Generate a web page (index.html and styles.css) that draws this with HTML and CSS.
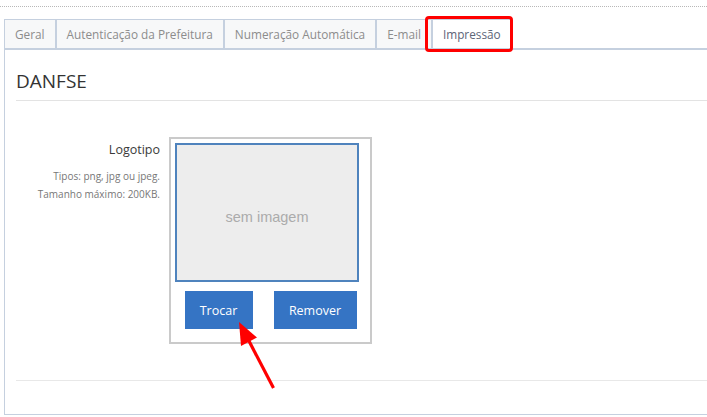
FILE: index.html
```html
<!DOCTYPE html>
<html lang="pt-BR">
<head>
<meta charset="utf-8">
<title>DANFSE</title>
<link rel="stylesheet" href="styles.css">
</head>
<body>
<div class="top-rule"></div>
<ul class="tabs">
  <li class="tab">Geral</li>
  <li class="tab">Autenticação da Prefeitura</li>
  <li class="tab">Numeração Automática</li>
  <li class="tab">E-mail</li>
  <li class="tab active">Impressão</li>
</ul>
<div class="panel">
  <h2 class="title">DANFSE</h2>
  <div class="form-row">
    <div class="label-col">
      <div class="label">Logotipo</div>
      <div class="hint">Tipos: png, jpg ou jpeg.<br>Tamanho máximo: 200KB.</div>
    </div>
    <div class="frame">
      <div class="preview">sem imagem</div>
      <div class="actions">
        <button class="btn btn-trocar">Trocar</button>
        <button class="btn btn-remover">Remover</button>
      </div>
    </div>
  </div>
  <div class="sep"></div>
</div>
<div class="highlight"></div>
<svg class="arrow" width="50" height="80" viewBox="0 0 50 80">
  <line x1="19" y1="26" x2="43.5" y2="73" stroke="#ff0000" stroke-width="3.2"/>
  <polygon points="9,7 11,31 27,22.5" fill="#ff0000"/>
</svg>
</body>
</html>
```
FILE: styles.css
```css
html, body {
  margin: 0;
  padding: 0;
  background: #ffffff;
  overflow: hidden;
}
body {
  position: relative;
  width: 707px;
  height: 417px;
  font-family: "Open Sans", "Liberation Sans", sans-serif;
  color: #333;
}
.top-rule {
  margin-top: 6px;
  border-top: 1px dotted #b8b8b8;
  height: 0;
}
.tabs {
  list-style: none;
  margin: 12px 0 0 4px;
  padding: 0;
  display: flex;
  border-bottom: 1px solid #c5d0df;
}
.tab {
  border: 1px solid #c5d0df;
  border-bottom: none;
  background: #f7f8f9;
  color: #8c8c8c;
  font-size: 11.8px;
  line-height: 18px;
  padding: 5px 10px;
}
.tab.active {
  background: #ffffff;
  color: #5d6577;
}
.panel {
  margin-left: 4px;
  border-left: 1px solid #c5d0df;
  border-top: 1px solid #c5d0df;
  border-bottom: 1px solid #c5d0df;
  padding: 0 0 33px 11px;
}
.title {
  margin: 18px 0 0 0;
  font-size: 19px;
  font-weight: normal;
  line-height: 26px;
  color: #333;
  padding-bottom: 6px;
  border-bottom: 1px solid #e3e3e3;
}
.form-row {
  display: flex;
  margin-top: 36px;
  gap: 9px;
}
.label-col {
  width: 144px;
  text-align: right;
  padding-top: 4px;
}
.label {
  font-size: 12.5px;
  line-height: 18px;
  color: #3a3a3a;
}
.hint {
  margin-top: 8px;
  font-size: 10px;
  line-height: 18px;
  color: #777;
}
.frame {
  box-sizing: border-box;
  width: 203px;
  border: 2px solid #cacaca;
  padding: 4px 4px 13px 4px;
}
.preview {
  box-sizing: border-box;
  width: 184px;
  height: 139px;
  border: 2px solid #4f83bd;
  background: #ededed;
  color: #ababab;
  font-family: "Liberation Sans", Arial, sans-serif;
  font-size: 14.5px;
  display: flex;
  align-items: center;
  justify-content: center;
  padding-top: 8px;
}
.actions {
  display: flex;
  justify-content: center;
  gap: 21px;
  margin-top: 9px;
}
.btn {
  height: 38px;
  border: none;
  background: #3574c4;
  color: #ffffff;
  font-family: "Open Sans", "Liberation Sans", sans-serif;
  font-size: 12.5px;
  padding: 0;
}
.btn-trocar { width: 68px; }
.btn-remover { width: 83px; }
.sep {
  margin-top: 36px;
  border-top: 1px solid #e8e8e8;
}
.highlight {
  position: absolute;
  left: 425px;
  top: 16px;
  width: 82px;
  height: 30px;
  border: 3px solid #ff0000;
  border-radius: 4px;
}
.arrow {
  position: absolute;
  left: 230px;
  top: 315px;
}
```
